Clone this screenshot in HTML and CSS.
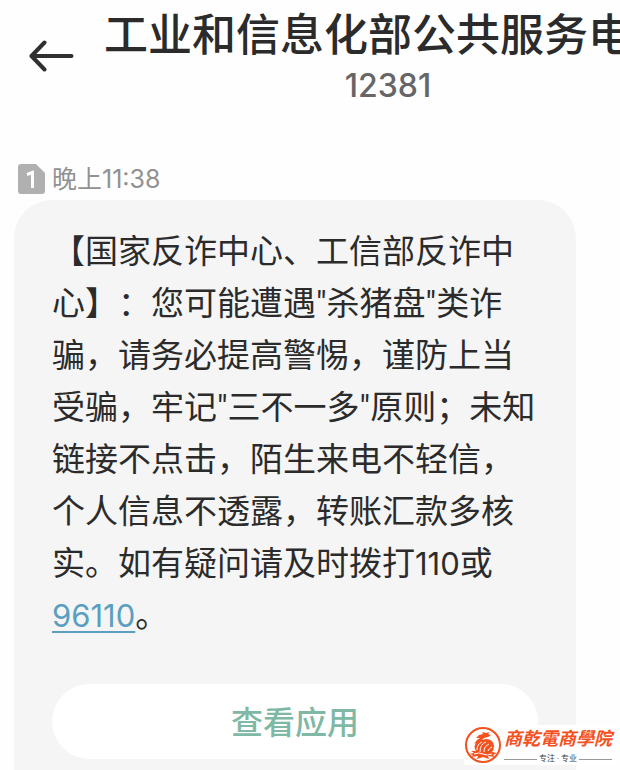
FILE: index.html
```
<!DOCTYPE html>
<html lang="zh-CN">
<head>
    <meta charset="UTF-8">
    <meta name="viewport" content="width=device-width, initial-scale=1.0">
    <title>12381</title>
    <link rel="stylesheet" href="styles.css">
</head>
<body>
    <!-- Header -->
    <header class="header">
        <button class="back-btn" type="button" aria-label="返回">
            <svg width="46" height="32" viewBox="0 0 46 32">
                <path d="M16.500 2.500L3.500 16L16.500 29.500M4 16H43.500" />
            </svg>
        </button>
        <div class="contact">
            <h1>工业和信息化部公共服务电</h1>
            <p class="number">12381</p>
        </div>
    </header>

    <!-- Conversation -->
    <main class="conversation">
        <div class="time-row">
            <svg class="sim" width="27" height="30" viewBox="0 0 27 30">
                <path class="sim-card" d="M3 0H18L27 9V27Q27 30 24 30H3Q0 30 0 27V3Q0 0 3 0Z" />
                <path class="sim-one" d="M9 10.500L14.500 8.500V24" />
            </svg>
            <time>晚上11:38</time>
        </div>

        <article class="bubble">
            <p class="message">
                【国家反诈中心、工信部反诈中<br>
                心】：您可能遭遇"杀猪盘"类诈<br>
                骗，请务必提高警惕，谨防上当<br>
                受骗，牢记"三不一多"原则；未知<br>
                链接不点击，陌生来电不轻信，<br>
                个人信息不透露，转账汇款多核<br>
                实。如有疑问请及时拨打<span class="digits">110</span>或<br>
                <a class="digits" href="tel:96110">96110</a>。
            </p>
            <button class="open-btn" type="button">查看应用</button>
        </article>
    </main>

    <!-- Watermark -->
    <div class="watermark">
        <svg width="38" height="38" viewBox="0 0 38 38">
            <circle cx="19" cy="19" r="17" />
            <path d="M12 12L15 9L19 8L18 6L22 7L26 6L24 8L27 9L24 11L20 12L18 14L22 13Q29 13 30 20Q30 24 28 26L33 27L29 29L31 31L24 30L25 33L19 31L13 33L14 30L7 31L9 29L5 28L10 27L7 25L12 25Q9 21 12 17L10 18L13 14L16 12Z" />
            <path class="mark-cut" d="M13 24Q13 18 18 16M16 26Q16 18 22 16M20 26Q20 20 25 18M24 25Q25 22 28 21M10 28Q15 26 19 28T28 28" />
        </svg>
        <div class="brand">
            <strong>商乾電商學院</strong>
            <small>专注 · 专业</small>
        </div>
    </div>
</body>
</html>
```

FILE: styles.css
```
/* General Reset */
* {
    margin: 0;
    padding: 0;
    box-sizing: border-box;
}

body {
    position: relative;
    min-height: 100vh;
    display: flex;
    flex-direction: column;
    overflow-x: hidden;
    background-color: #fefefe;
    color: #2b2b2b;
    font-family: Roboto, "Noto Sans CJK SC", sans-serif;
}

button {
    border: none;
    font-family: inherit;
    cursor: pointer;
}

/* Header */
.header {
    display: flex;
    align-items: flex-start;
    padding-top: 8px;
}

.back-btn {
    flex: none;
    width: 76px;
    height: 32px;
    margin: 32px 28px 0 0;
    padding-left: 28px;
    background: none;
}

.back-btn svg {
    display: block;
    fill: none;
    stroke: #303030;
    stroke-width: 4;
    stroke-linecap: round;
    stroke-linejoin: round;
}

.contact {
    flex: 1;
    min-width: 0;
}

.contact h1 {
    overflow: hidden;
    white-space: nowrap;
    font-size: 44px;
    font-weight: 500;
    line-height: 56px;
}

.number {
    padding-left: 52px;
    color: #666;
    font-family: Inter, sans-serif;
    font-size: 32px;
    font-weight: 500;
    line-height: 44px;
    text-align: center;
}

/* Conversation */
.conversation {
    flex: 1;
    display: flex;
    flex-direction: column;
    padding: 54px 44px 0 14px;
}

.time-row {
    display: flex;
    align-items: center;
    gap: 7px;
    padding-left: 4px;
    margin-bottom: 4px;
    color: #919191;
    font-family: Inter, "Noto Sans CJK SC", sans-serif;
    font-size: 25px;
    line-height: 34px;
}

.sim-card {
    fill: #b0b0b0;
}

.sim-one {
    fill: none;
    stroke: #fff;
    stroke-width: 3;
}

.bubble {
    flex: 1;
    padding: 26px 38px 11px;
    border-radius: 38px 38px 0 0;
    background-color: #f5f5f5;
}

.message {
    white-space: nowrap;
    text-spacing-trim: space-all;
    font-size: 33px;
    line-height: 52px;
}

.digits {
    font-family: Inter, sans-serif;
    font-size: 31px;
}

.message a {
    color: #5a9fc0;
    text-decoration-thickness: 2px;
    text-underline-offset: 4px;
}

.open-btn {
    display: block;
    width: 100%;
    height: 75px;
    margin-top: 42px;
    padding-bottom: 4px;
    border-radius: 38px;
    background-color: #fff;
    color: #7fb8a4;
    font-size: 32px;
    font-weight: 500;
}

/* Watermark over the bottom right corner */
.watermark {
    position: absolute;
    right: 3px;
    bottom: 5px;
    display: flex;
    align-items: center;
    gap: 2px;
    padding-right: 5px;
    background-color: #fff;
}

.watermark svg {
    fill: #f4511e;
}

.watermark circle {
    fill: none;
    stroke: #f4511e;
    stroke-width: 2;
}

.watermark .mark-cut {
    fill: none;
    stroke: #fff;
    stroke-width: 1;
}

.brand strong {
    display: block;
    color: #f4511e;
    font-size: 18px;
    font-style: italic;
    font-weight: 700;
    line-height: 28px;
}

.brand small {
    display: flex;
    align-items: center;
    gap: 2px;
    color: #444;
    font-size: 8px;
    line-height: 12px;
    white-space: nowrap;
}

.brand small::before,
.brand small::after {
    content: "";
    flex: 1;
    height: 1px;
    background-color: #999;
}
```
